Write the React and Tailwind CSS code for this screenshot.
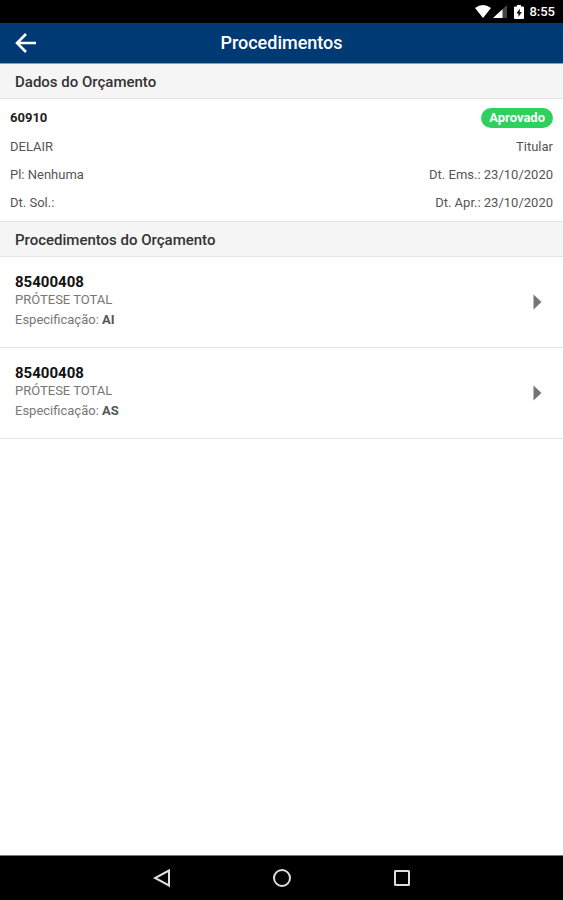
import React from "react";

const details = [
  { left: "DELAIR", right: "Titular" },
  { left: "Pl: Nenhuma", right: "Dt. Ems.: 23/10/2020" },
  { left: "Dt. Sol.:", right: "Dt. Apr.: 23/10/2020" },
];

const procedures = [
  { id: 1, code: "85400408", name: "PRÓTESE TOTAL", spec: "AI" },
  { id: 2, code: "85400408", name: "PRÓTESE TOTAL", spec: "AS" },
];

const StatusBar = () => (
  <div className="flex h-[23px] items-center justify-end bg-black pr-2 text-white">
    <svg width="16" height="13" viewBox="0 0 16 13" fill="currentColor" aria-hidden="true">
      <path d="M8 13 0 3Q8-3 16 3Z" />
    </svg>
    <svg className="ml-0.5" width="14" height="13" viewBox="0 0 14 13" aria-hidden="true">
      <path d="M14 0V13H0Z" fill="#444444" />
      <path d="M9.500 4.200V13H0Z" fill="#ffffff" />
    </svg>
    <svg className="ml-[7px]" width="10" height="14" viewBox="0 0 10 14" aria-hidden="true">
      <path d="M3 0h4v1.500h2q1 0 1 1V13q0 1-1 1H1q-1 0-1-1V2.500q0-1 1-1h2Z" fill="#ffffff" />
      <path d="M5.800 3.500 2.500 8.500h2V12l3.200-5h-2Z" fill="#000000" />
    </svg>
    <span className="ml-[5px] text-[13px] leading-4 font-medium">8:55</span>
  </div>
);

const Header = () => (
  <header className="grid h-[41px] grid-cols-[48px_1fr_48px] items-center border-b border-[#8b9dbd] bg-[#003a75] text-white">
    <button type="button" aria-label="Voltar" className="flex h-full items-center pl-[15px]">
      <svg width="22" height="20" viewBox="0 0 22 20" fill="none" stroke="currentColor" strokeWidth="2.600" aria-hidden="true">
        <path d="M11 1 2 10l9 9M2 10h19" />
      </svg>
    </button>
    <h1 className="text-center text-lg leading-6 font-medium">Procedimentos</h1>
  </header>
);

const SectionTitle = ({ children }) => (
  <h2 className="border-b border-[#e4e4e4] bg-[#f5f5f5] px-[15px] pt-2 pb-1.5 text-[15px] leading-5 font-medium text-[#333333]">
    {children}
  </h2>
);

const BudgetDetails = () => (
  <div className="border-b border-[#e4e4e4] px-[10px] py-1 text-[13px] text-[#555555]">
    <div className="flex h-[30px] items-center justify-between">
      <span className="font-bold text-[#222222]">60910</span>
      <span className="rounded-full bg-[#2dd15b] px-2 text-[13px] leading-5 font-bold text-white">
        Aprovado
      </span>
    </div>
    {details.map((row) => (
      <div key={row.left} className="flex h-7 items-center justify-between">
        <span>{row.left}</span>
        <span>{row.right}</span>
      </div>
    ))}
  </div>
);

const ProcedureItem = ({ code, name, spec }) => (
  <li className="border-b border-[#e4e4e4]">
    <button type="button" className="flex w-full items-center justify-between py-[15px] pr-[21px] pl-[15px] text-left">
      <span className="flex flex-col text-[13px] leading-5 text-[#777777]">
        <span className="text-[15px] leading-5 font-bold text-[#111111]">{code}</span>
        <span className="leading-4">{name}</span>
        <span className="leading-6">
          Especificação: <b className="font-bold text-[#555555]">{spec}</b>
        </span>
      </span>
      <svg width="9" height="16" viewBox="0 0 9 16" fill="#757575" aria-hidden="true">
        <path d="M0.500 0.500 8.500 8 0.500 15.500Z" />
      </svg>
    </button>
  </li>
);

const NavigationBar = () => (
  <nav className="flex h-[45px] items-center justify-center gap-[96px] border-t border-[#777777] bg-black text-[#dddddd]">
    <button type="button" aria-label="Voltar" className="flex size-6 items-center justify-center">
      <svg width="18" height="20" viewBox="0 0 18 20" fill="none" stroke="currentColor" strokeWidth="2" aria-hidden="true">
        <path d="M16 2.500v15L2 10Z" />
      </svg>
    </button>
    <button type="button" aria-label="Início" className="flex size-6 items-center justify-center">
      <svg width="20" height="20" viewBox="0 0 20 20" fill="none" stroke="currentColor" strokeWidth="2" aria-hidden="true">
        <circle cx="10" cy="10" r="8" />
      </svg>
    </button>
    <button type="button" aria-label="Recentes" className="flex size-6 items-center justify-center">
      <svg width="16" height="16" viewBox="0 0 16 16" fill="none" stroke="currentColor" strokeWidth="2" aria-hidden="true">
        <rect x="1" y="1" width="14" height="14" rx="0.500" />
      </svg>
    </button>
  </nav>
);

const App = () => {
  return (
    <div className="flex min-h-screen flex-col bg-white font-[Roboto,sans-serif]">
      <StatusBar />
      <Header />
      <main className="flex-1">
        <SectionTitle>Dados do Orçamento</SectionTitle>
        <BudgetDetails />
        <SectionTitle>Procedimentos do Orçamento</SectionTitle>
        <ul>
          {procedures.map((item) => (
            <ProcedureItem key={item.id} code={item.code} name={item.name} spec={item.spec} />
          ))}
        </ul>
      </main>
      <NavigationBar />
    </div>
  );
};

export default App;
